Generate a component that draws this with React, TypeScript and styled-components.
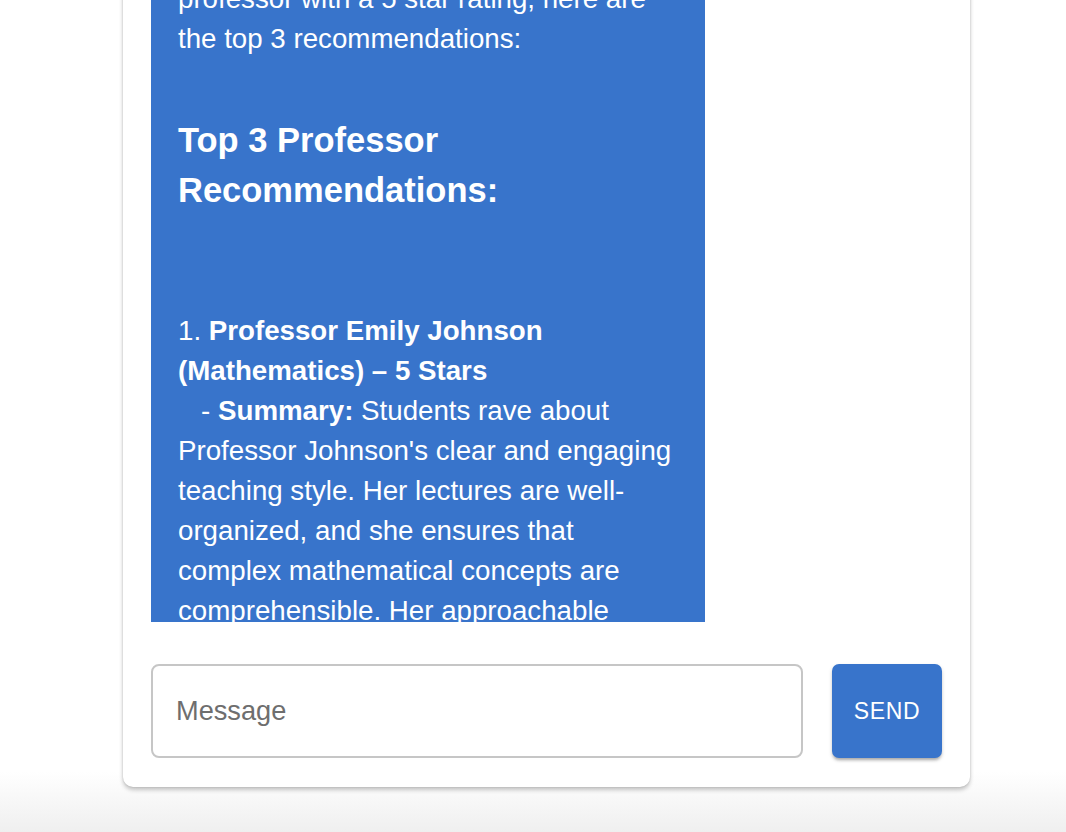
import { useLayoutEffect, useRef } from 'react';
import styled, { createGlobalStyle } from 'styled-components';

const GlobalStyle = createGlobalStyle`
  html, body {
    margin: 0;
    padding: 0;
    font-family: 'Liberation Sans', Arial, Helvetica, sans-serif;
    background: #fff;
  }
`;

const Page = styled.main`
  height: 100vh;
  box-sizing: border-box;
  overflow: hidden;
  display: flex;
  flex-direction: column;
  justify-content: flex-end;
  align-items: flex-start;
  padding: 0 0 45px 123px;
  background: linear-gradient(to bottom, #fff 0, #fff calc(100% - 60px), #efefef 100%);
`;

const ChatCard = styled.section`
  flex-shrink: 0;
  width: 847px;
  box-sizing: border-box;
  padding: 28px 28px 29px;
  display: flex;
  flex-direction: column;
  gap: 42px;
  background: #fff;
  border-radius: 10px;
  box-shadow: 0 3px 4px rgba(0, 0, 0, 0.22), 0 0 2px rgba(0, 0, 0, 0.16);
`;

const MessageList = styled.div`
  height: 860px;
  overflow: hidden;
  display: flex;
  flex-direction: column;
  gap: 28px;
`;

const Bubble = styled.div<{ $mine?: boolean }>`
  align-self: ${(p) => (p.$mine ? 'flex-end' : 'flex-start')};
  width: ${(p) => (p.$mine ? 'auto' : '554px')};
  max-width: 554px;
  box-sizing: border-box;
  padding: 20px 27px;
  border-radius: 16px;
  background: ${(p) => (p.$mine ? '#9c27b0' : '#3874cb')};
  color: #fff;
  font-size: 27.7px;
  line-height: 40px;
  white-space: pre-wrap;
`;

const Paragraph = styled.p`
  margin: 0;
`;

const Heading = styled.h3`
  margin: 56px 0 96px;
  font-size: 34.5px;
  line-height: 50px;
  font-weight: 700;
`;

const InputRow = styled.form`
  display: flex;
  gap: 29px;
  height: 94px;
  margin: 0;
`;

const MessageInput = styled.input`
  flex: 1;
  min-width: 0;
  box-sizing: border-box;
  border: 2px solid #c6c6c6;
  border-radius: 8px;
  padding: 0 23px;
  font-family: inherit;
  font-size: 27.2px;
  color: #222;
  caret-color: #000;
  outline: none;
  background: #fff;

  &::placeholder {
    color: #6e6e6e;
  }
`;

const SendButton = styled.button`
  flex-shrink: 0;
  width: 110px;
  border: none;
  border-radius: 7px;
  background: #3874cb;
  color: #fff;
  font-family: inherit;
  font-size: 23px;
  letter-spacing: 0.6px;
  text-transform: uppercase;
  box-shadow: 0 3px 3px -1px rgba(0, 0, 0, 0.25), 0 2px 4px rgba(0, 0, 0, 0.14);
  cursor: pointer;
`;

export default function App() {
  const listRef = useRef<HTMLDivElement>(null);
  const headingRef = useRef<HTMLHeadingElement>(null);

  useLayoutEffect(() => {
    const place = () => {
      const list = listRef.current;
      const heading = headingRef.current;
      if (!list || !heading) return;
      list.scrollTop += heading.getBoundingClientRect().top - 115;
    };
    place();
    document.fonts?.ready.then(place);
  }, []);

  return (
    <>
      <GlobalStyle />
      <Page>
        <ChatCard>
          <MessageList ref={listRef}>
            <Bubble>Hi! I'm the Rate My Professor support assistant. How can I help you today?</Bubble>
            <Bubble $mine>I want a professor with a 5 star rating</Bubble>
            <Bubble>
              <Paragraph>
                Based on your request for a{'\n'}professor with a 5 star rating, here are the top 3 recommendations:
              </Paragraph>
              <Heading ref={headingRef}>Top 3 Professor Recommendations:</Heading>
              <Paragraph>
                1. <b>Professor Emily Johnson (Mathematics) – 5 Stars</b>
                {'\n   - '}
                <b>Summary:</b> Students rave about Professor Johnson's clear and engaging teaching style. Her lectures
                are well-organized, and she ensures that complex mathematical concepts are comprehensible. Her
                approachable nature makes office hours a favorite among students.
                {'\n\n'}2. <b>Professor Michael Lee (Computer Science) – 5 Stars</b>
                {'\n   - '}
                <b>Summary:</b> Known for hands-on projects and real-world examples, Professor Lee keeps every class
                engaging and practical.
              </Paragraph>
            </Bubble>
          </MessageList>
          <InputRow onSubmit={(e) => e.preventDefault()}>
            <MessageInput placeholder="Message" autoFocus />
            <SendButton type="submit">Send</SendButton>
          </InputRow>
        </ChatCard>
      </Page>
    </>
  );
}
